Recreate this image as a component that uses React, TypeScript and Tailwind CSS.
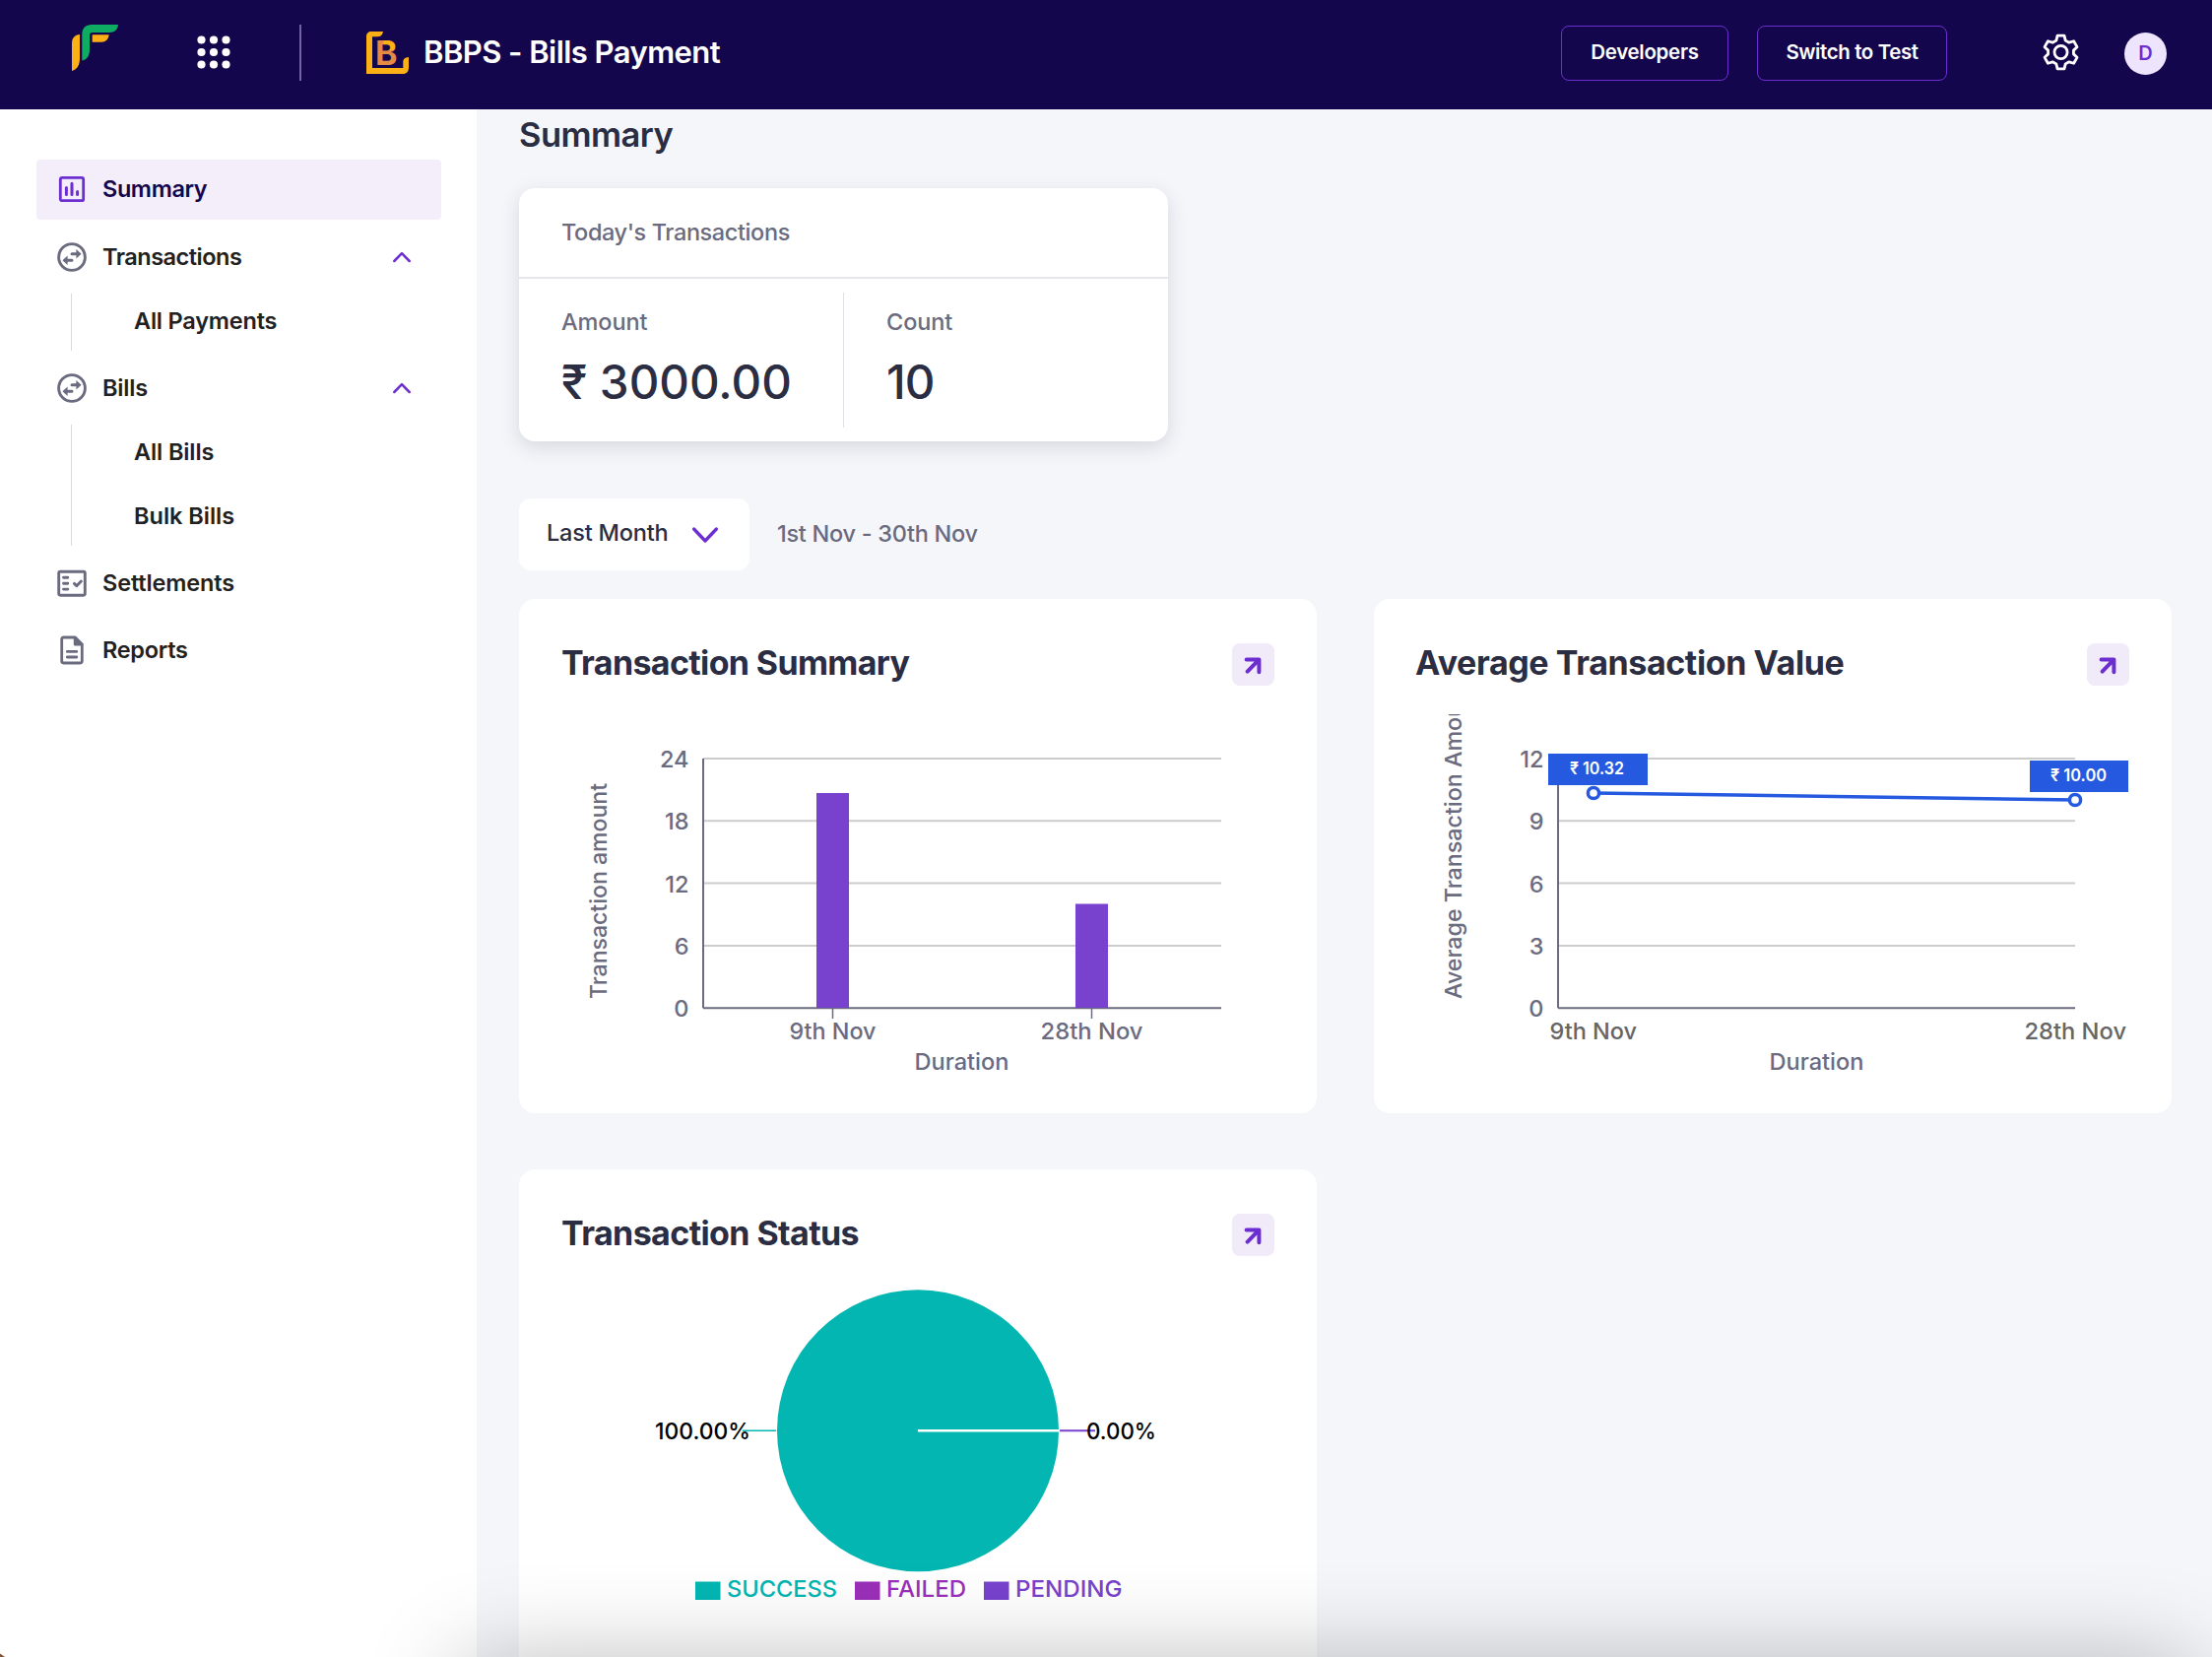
import type { ReactNode } from "react";

const GRID_COLOR = "#cccccc";
const AXIS_COLOR = "#6b6b80";

// CARD WRAPPER FOR THE CHARTS
const ChartCard = ({ title, titleClass, children }: { title: string; titleClass: string; children: ReactNode }) => (
  <section className="w-[810px] h-[522px] rounded-2xl bg-white overflow-hidden">
    <div className="flex items-center justify-between h-[43px] mt-[45px] pl-[43px] pr-[43px]">
      <h2 className={`font-bold text-[34px] leading-[40px] -mt-[3px] text-[#2b2d42] whitespace-nowrap ${titleClass}`}>
        {title}
      </h2>
      <button className="flex items-center justify-center w-[43px] h-[43px] rounded-lg bg-[#f0eaf9]">
        <svg width="43" height="43" viewBox="0 0 43 43" fill="none" stroke="#6c2ed0" strokeWidth="4" strokeLinecap="round" strokeLinejoin="round">
          <path d="M14.6 16.4H27.4V29.2M27 16.8L15.6 28.6" />
        </svg>
      </button>
    </div>
    {children}
  </section>
);

// Y AXIS TICKS + GRID LINES
const Grid = ({ ticks, left, right }: { ticks: number[]; left: number; right: number }) => (
  <>
    {ticks.map((tick, i) => {
      const y = 74 + i * 63.3;
      const last = i === ticks.length - 1;
      return (
        <g key={tick}>
          <line x1={left} x2={right} y1={y} y2={y} stroke={last ? AXIS_COLOR : GRID_COLOR} strokeWidth="2" />
          <text x={left - 14.5} y={y + 9} textAnchor="end">{tick}</text>
        </g>
      );
    })}
    <line x1={left} x2={left} y1="74" y2="327.2" stroke={AXIS_COLOR} strokeWidth="2" />
  </>
);

const BarChart = () => (
  <svg width="810" height="434" viewBox="0 0 810 434" className="font-['Inter'] text-[23.5px] font-medium" fill="#6b6b80">
    <Grid ticks={[24, 18, 12, 6, 0]} left={187} right={713} />
    <rect x="302" y="109" width="33" height="218" fill="#7842ce" />
    <rect x="565" y="221.5" width="33" height="105.5" fill="#7842ce" />
    <path d="M318.5 327V338M581.5 327V338" stroke={AXIS_COLOR} strokeWidth="1.5" />
    <text x="274.5" y="359" textLength="88" lengthAdjust="spacingAndGlyphs">9th Nov</text>
    <text x="529.5" y="359" textLength="104" lengthAdjust="spacingAndGlyphs">28th Nov</text>
    <text x="401.5" y="390" textLength="96" lengthAdjust="spacingAndGlyphs">Duration</text>
    <text transform="translate(89 318) rotate(-90)" textLength="219" lengthAdjust="spacingAndGlyphs">Transaction amount</text>
  </svg>
);

const LineChart = () => (
  <svg width="810" height="434" viewBox="0 0 810 434" className="font-['Inter'] text-[23.5px] font-medium" fill="#6b6b80">
    <defs>
      <clipPath id="plot">
        <rect x="0" y="29" width="810" height="405" />
      </clipPath>
    </defs>
    <Grid ticks={[12, 9, 6, 3, 0]} left={187} right={712} />
    <g fill="#666666">
      <text x="178.5" y="359" textLength="88.5" lengthAdjust="spacingAndGlyphs">9th Nov</text>
      <text x="660.5" y="359" textLength="103.5" lengthAdjust="spacingAndGlyphs">28th Nov</text>
    </g>
    <text x="401.5" y="390" textLength="96" lengthAdjust="spacingAndGlyphs">Duration</text>
    <g clipPath="url(#plot)">
      <text transform="translate(88.5 318) rotate(-90)" textLength="322" lengthAdjust="spacingAndGlyphs">Average Transaction Amount</text>
    </g>

    {/* Series */}
    <g stroke="#2459e0" strokeWidth="3.5" fill="#ffffff">
      <path d="M223 109L712 116" />
      <circle cx="223" cy="109" r="5.6" />
      <circle cx="712" cy="116" r="5.6" />
    </g>
    <rect x="177" y="69" width="101" height="32" fill="#2459e0" />
    <rect x="666" y="76" width="100" height="32" fill="#2459e0" />
    <g fill="#ffffff" className="text-[17.5px] font-semibold">
      <text x="199" y="90" textLength="55" lengthAdjust="spacingAndGlyphs">₹ 10.32</text>
      <text x="687" y="97" textLength="57" lengthAdjust="spacingAndGlyphs">₹ 10.00</text>
    </g>
  </svg>
);

const legend = [
  { label: "SUCCESS", color: "#03b6b2", x: 179, textX: 211, width: 112 },
  { label: "FAILED", color: "#9b2fb9", x: 341, textX: 373, width: 81 },
  { label: "PENDING", color: "#7842ce", x: 472, textX: 504, width: 108.5 },
];

const StatusPie = () => (
  <svg width="810" height="434" viewBox="0 0 810 434" className="font-['Inter'] text-[23.5px] font-medium">
    <circle cx="405" cy="177.3" r="143" fill="#03b6b2" />
    <path d="M405 177.3H548.5" stroke="#ffffff" strokeWidth="2.6" />
    <path d="M227 177.3H261" stroke="#03b6b2" strokeWidth="1.6" />
    <path d="M549 177.3H585" stroke="#7842ce" strokeWidth="2" />
    <text x="138" y="186" textLength="97" lengthAdjust="spacingAndGlyphs">100.00%</text>
    <text x="576" y="186" textLength="71" lengthAdjust="spacingAndGlyphs">0.00%</text>
    {legend.map((item) => (
      <g key={item.label} fill={item.color}>
        <rect x={item.x} y="330.5" width="25.5" height="18.5" />
        <text x={item.textX} y="346" textLength={item.width} lengthAdjust="spacingAndGlyphs">{item.label}</text>
      </g>
    ))}
  </svg>
);

// SIDEBAR ICONS
const SummaryIcon = () => (
  <svg width="32" height="32" viewBox="0 0 32 32" fill="none" stroke="#6c2ed0">
    <rect x="4.3" y="4.3" width="23.4" height="23.4" rx="1.8" strokeWidth="2.8" />
    <path d="M10.4 14.4V21.6M16 10.2V21.6M21.6 18.4V21.6" strokeWidth="3" strokeLinecap="round" />
  </svg>
);

const SwapIcon = () => (
  <svg width="32" height="32" viewBox="0 0 32 32">
    <circle cx="16" cy="16" r="13.4" fill="none" stroke="#6b6b80" strokeWidth="2.9" />
    <path d="M16 12.8H21M11 19.2H16" stroke="#6b6b80" strokeWidth="3" strokeLinecap="round" />
    <path d="M20.4 8L25.6 12.8L20.4 17.4ZM11.6 14.6L6.4 19.2L11.6 24Z" fill="#6b6b80" />
  </svg>
);

const SettlementsIcon = () => (
  <svg width="32" height="32" viewBox="0 0 32 32" fill="none" stroke="#6b6b80" strokeWidth="2.9" strokeLinecap="round" strokeLinejoin="round">
    <rect x="2.7" y="4.2" width="26.6" height="24" rx="1.6" />
    <path d="M7.5 10.3H11.8M7.5 16.2H11.8M7.5 22.1H11.8M18.4 16.4L20.8 18.7L25.4 14" />
  </svg>
);

const ReportsIcon = () => (
  <svg width="32" height="32" viewBox="0 0 32 32" fill="none" stroke="#6b6b80" strokeWidth="2.8" strokeLinecap="round" strokeLinejoin="round">
    <path d="M19.4 3H7.6C6.4 3 5.7 3.7 5.7 4.9V27.1C5.7 28.3 6.4 29 7.6 29H24.4C25.6 29 26.3 28.3 26.3 27.1V10Z" />
    <path d="M19.2 3.6V10.2H26" fill="#6b6b80" />
    <path d="M11.3 17.4H20.8M11.3 23H20.8" />
  </svg>
);

const ChevronUp = () => (
  <svg width="20" height="12" viewBox="0 0 20 12" fill="none" stroke="#6c2ed0" strokeWidth="2.5" strokeLinecap="round" strokeLinejoin="round">
    <path d="M2.3 10L10 2.2L17.7 10" />
  </svg>
);

const NavItem = ({ icon, label, labelClass, open }: { icon: ReactNode; label: string; labelClass: string; open?: boolean }) => (
  <div className="flex items-center h-[60px] pl-5 pr-[30px] text-[#212121]">
    {icon}
    <span className={`ml-[15px] ${labelClass}`}>{label}</span>
    {open && (
      <span className="ml-auto">
        <ChevronUp />
      </span>
    )}
  </div>
);

const Sidebar = () => (
  <aside className="w-[484px] shrink-0 bg-white pt-[51px] pl-[37px] pr-9 text-[23.5px] leading-[30px] font-semibold">

    {/* ACTIVE ITEM */}
    <div className="flex items-center h-[61px] pl-5 pb-0.5 rounded bg-[#f4eefb] text-[#14064c]">
      <SummaryIcon />
      <span className="ml-[15px] tracking-[-0.4px]">Summary</span>
    </div>

    <div className="mt-2">
      <NavItem icon={<SwapIcon />} label="Transactions" labelClass="tracking-[-0.5px]" open />
    </div>
    <div className="ml-[35px] mt-[7px] pl-[63px] h-[58px] pt-[13px] border-l border-[#d9d9de] text-[#212121]">
      <div className="tracking-[-0.2px]">All Payments</div>
    </div>

    <div className="mt-2">
      <NavItem icon={<SwapIcon />} label="Bills" labelClass="tracking-[-0.2px]" open />
    </div>
    <div className="ml-[35px] mt-[7px] pl-[63px] h-[123px] pt-[13px] border-l border-[#d9d9de] text-[#212121]">
      <div className="tracking-[-0.1px]">All Bills</div>
      <div className="mt-[35px] tracking-[0px]">Bulk Bills</div>
    </div>

    <div className="mt-2 space-y-2">
      <NavItem icon={<SettlementsIcon />} label="Settlements" labelClass="tracking-[-0.15px]" />
      <NavItem icon={<ReportsIcon />} label="Reports" labelClass="tracking-[-0.3px]" />
    </div>

  </aside>
);

const Logo = () => (
  <svg width="48" height="48" viewBox="0 0 48 48">
    <path d="M8 10V34C8 41 5.5 45.5 0 47V19C0 13.5 3 10.5 8 10Z" fill="#fdb015" />
    <path d="M47 0C46.5 5 43.5 8 38 8H21C19 8 18 9 18 11V25C18 31.5 15.5 35.5 10.3 36.5V10C10.3 3.5 14 0 20 0Z" fill="#0eab62" />
    <path d="M20.7 10.3H37.7C36.9 15 34.5 17.7 30 17.7H20.7Z" fill="#fdb015" />
  </svg>
);

const AppsIcon = () => (
  <svg width="34" height="34" viewBox="0 0 34 34" fill="#ffffff">
    {[4.5, 17, 29.5].map((cy) =>
      [4.5, 17, 29.5].map((cx) => <circle key={`${cx}-${cy}`} cx={cx} cy={cy} r="4.1" />)
    )}
  </svg>
);

const BbpsIcon = () => (
  <svg width="43" height="43" viewBox="0 0 43 43">
    <defs>
      <pattern id="bbps" width="43" height="43" patternUnits="userSpaceOnUse">
        <rect width="43" height="43" fill="#e58a45" />
        <rect x="17.3" width="26" height="19" fill="#fdb015" />
      </pattern>
    </defs>
    <path d="M5 0H17C16.5 3.5 14.5 5.3 11 5.3H6V37H37.3V31C37.3 28 39 26.3 43 26V36C43 40.5 41 43 37 43H0V5C0 2 2 0 5 0Z" fill="#fdb015" />
    <text x="9" y="34" fill="url(#bbps)" className="font-['Inter'] font-bold text-[34px]">B</text>
  </svg>
);

const Header = () => (
  <header className="flex items-center h-[111px] pl-[73px] pr-[46px] bg-[#14064c] text-white">
    <div className="-mt-[14px]">
      <Logo />
    </div>
    <div className="ml-[79px] -mt-[5px]">
      <AppsIcon />
    </div>
    <div className="ml-[70px] mt-[-4px] w-0.5 h-[57px] bg-[#7264a4]"></div>
    <div className="ml-[66px] -mt-1">
      <BbpsIcon />
    </div>
    <h1 className="ml-[15px] -mt-[5px] text-[31px] leading-10 font-semibold tracking-[-0.55px] whitespace-nowrap">BBPS - Bills Payment</h1>

    <div className="ml-auto flex items-center -mt-[3px]">
      <button className="w-[170px] h-[56px] pb-0.5 rounded-lg border border-[#6c2ed0] text-[20.5px] font-semibold tracking-[-0.3px]">Developers</button>
      <button className="w-[193px] h-[56px] pb-0.5 ml-[29px] rounded-lg border border-[#6c2ed0] text-[20.5px] font-semibold tracking-[-0.4px]">Switch to Test</button>
      <svg className="ml-[97px] -mt-0.5" width="38" height="40" viewBox="-0.8 -1 40.600 42" fill="none" stroke="#ffffff" strokeWidth="3" strokeLinejoin="round">
        <path d="M15.3 2H22.7L24 7.3L27.9 9.5L33 8L36.6 14.3L32.8 18V22L36.6 25.7L33 32L27.9 30.5L24 32.7L22.7 38H15.3L14 32.7L10.1 30.5L5 32L1.4 25.7L5.2 22V18L1.4 14.3L5 8L10.1 9.5L14 7.3Z" />
        <circle cx="19" cy="20" r="7" />
      </svg>
      <div className="ml-[45px] w-[43px] h-[43px] rounded-full bg-[#efe4fd] text-[#6c2ed0] flex items-center justify-center text-[20px] font-semibold">D</div>
    </div>
  </header>
);

const App = () => {
  return (
    <div className="relative w-[2246px] h-[1682px] overflow-hidden bg-[#f4f6fa] font-['Inter',sans-serif]">

      <Header />

      <div className="flex h-[1571px]">
        <Sidebar />

        <main className="flex-1 pl-[43px] overflow-hidden">

          <h2 className="mt-[6px] h-[39px] text-[34.5px] leading-10 font-semibold tracking-[-0.55px] text-[#2b2d42]">Summary</h2>

          {/* TODAY */}
          <section className="mt-[35px] w-[659px] h-[257px] rounded-2xl bg-white shadow-[0_6px_20px_rgba(43,45,66,0.15)]">
            <div className="flex items-center h-[92px] pl-[43px] border-b-2 border-[#e6e6ec] text-[23.5px] font-medium tracking-[-0.4px] text-[#6b6b80]">
              Today's Transactions
            </div>
            <div className="flex pt-3.5">
              <div className="w-[330px] h-[137px] pl-[43px] pt-[15px] border-r border-[#e0e0e6]">
                <div className="text-[23.5px] font-medium leading-[30px] tracking-[-0.1px] text-[#6b6b80]">Amount</div>
                <div className="mt-[18px] text-[47.5px] font-[450] leading-[56px] tracking-[0px] whitespace-nowrap text-[#2b2d42]">₹ 3000.00</div>
              </div>
              <div className="pl-[43px] pt-[15px]">
                <div className="text-[23.5px] font-medium leading-[30px] tracking-[-0.1px] text-[#6b6b80]">Count</div>
                <div className="mt-[18px] text-[47.5px] font-[450] leading-[56px] tracking-[-1px] text-[#2b2d42]">10</div>
              </div>
            </div>
          </section>

          {/* PERIOD FILTER */}
          <div className="flex items-center mt-[58px] h-[73px]">
            <button className="flex items-center w-[234px] h-[73px] pl-7 rounded-xl bg-white text-[23.5px] font-medium text-[#2b2d42]">
              <span className="-mt-1 tracking-[-0.2px] whitespace-nowrap">Last Month</span>
              <svg className="ml-auto mr-[31px]" width="28" height="18" viewBox="0 0 28 18" fill="none" stroke="#6c2ed0" strokeWidth="3.3" strokeLinecap="round" strokeLinejoin="round">
                <path d="M2.6 3L14 15L25.4 3" />
              </svg>
            </button>
            <span className="ml-[28px] -mt-0.5 text-[23.5px] font-medium tracking-[-0.28px] text-[#6b6b80]">1st Nov - 30th Nov</span>
          </div>

          <div className="grid grid-cols-[810px_810px] gap-x-[58px] gap-y-[57px] mt-[29px]">
            <ChartCard title="Transaction Summary" titleClass="tracking-[-0.65px]">
              <BarChart />
            </ChartCard>
            <ChartCard title="Average Transaction Value" titleClass="tracking-[-0.4px] -ml-px">
              <LineChart />
            </ChartCard>
            <ChartCard title="Transaction Status" titleClass="tracking-[-0.6px]">
              <StatusPie />
            </ChartCard>
          </div>

        </main>
      </div>

      {/* Soft shade along the bottom edge */}
      <div className="absolute left-[490px] right-[40px] top-[1712px] h-40 shadow-[0_0_100px_20px_rgba(0,0,0,0.3)]"></div>

      {/* Window corner */}
      <svg className="absolute left-0 bottom-0" width="5" height="4" viewBox="0 0 5 4">
        <path d="M0 0.500L5 4H0Z" fill="#7d5238" />
      </svg>

    </div>
  );
};

export default App;
